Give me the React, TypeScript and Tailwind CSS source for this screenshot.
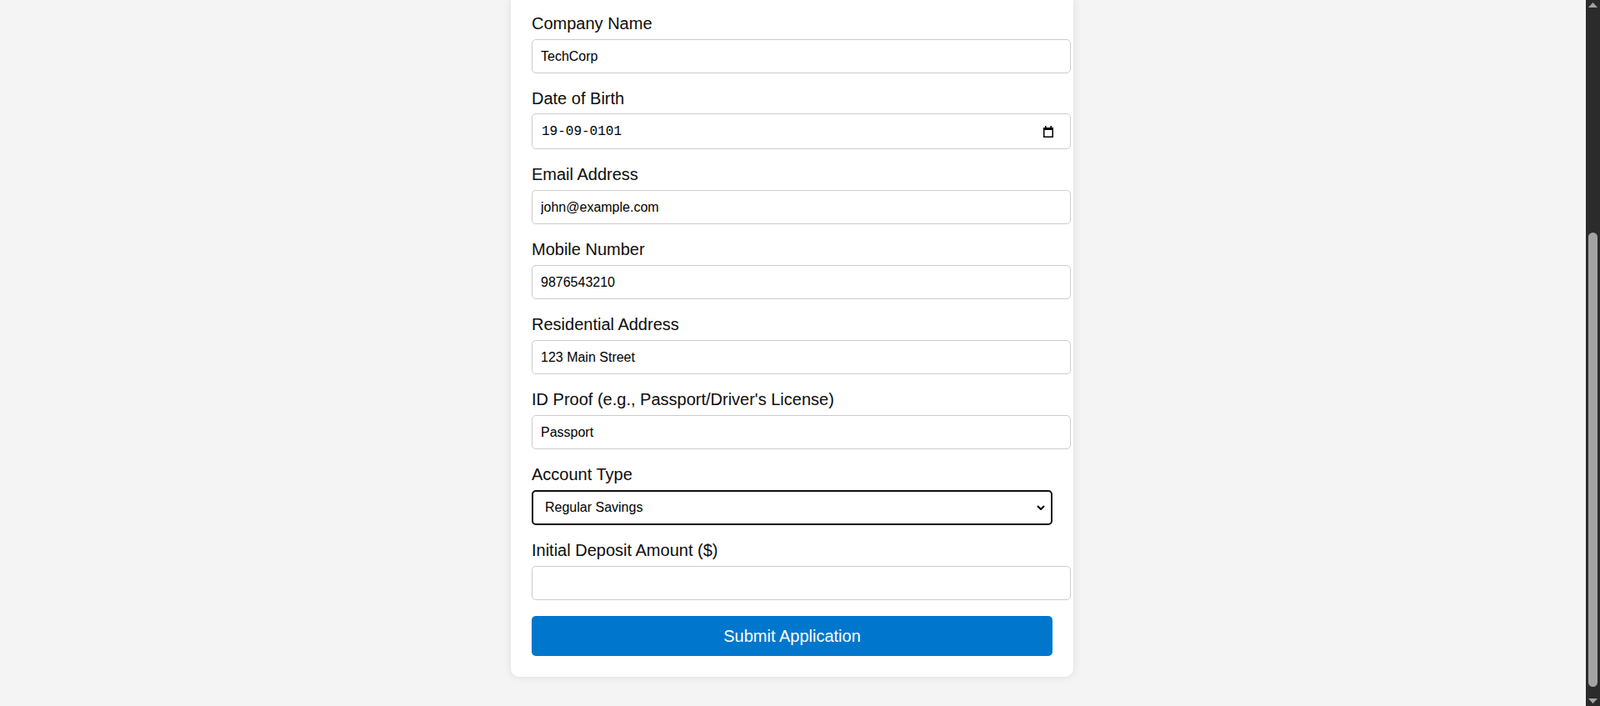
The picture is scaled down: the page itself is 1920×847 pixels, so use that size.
import React from 'react';

const fields = [
  { label: 'Company Name', value: 'TechCorp' },
  { label: 'Date of Birth', value: '19-09-0101', kind: 'date' },
  { label: 'Email Address', value: 'john@example.com' },
  { label: 'Mobile Number', value: '9876543210' },
  { label: 'Residential Address', value: '123 Main Street' },
  { label: "ID Proof (e.g., Passport/Driver's License)", value: 'Passport' },
  { label: 'Account Type', value: 'Regular Savings', kind: 'select' },
  { label: 'Initial Deposit Amount ($)', value: '', kind: 'last' },
];

function CalendarIcon() {
  return (
    <svg width="12" height="14" viewBox="0 0 12 14" className="shrink-0">
      <rect x="2" y="0" width="1.6" height="3" fill="#000" />
      <rect x="8.4" y="0" width="1.6" height="3" fill="#000" />
      <rect x="0" y="2" width="12" height="3" fill="#000" />
      <rect x="0.75" y="2.75" width="10.5" height="10.5" fill="none" stroke="#000" strokeWidth="1.5" />
    </svg>
  );
}

function Field({ label, value, kind }: { label: string; value: string; kind?: string }) {
  return (
    <div className={kind === 'last' ? 'mb-[19px]' : 'mb-[18px]'}>
      <label
        className={`block h-[23px] leading-[25px] text-[20px] text-[#0d0d0d] ${
          kind === 'date' ? 'mb-[7px]' : 'mb-2'
        }`}
      >
        {label}
      </label>

      {kind === 'date' && (
        <div className="w-[647px] h-[43px] flex items-center justify-between pl-[11px] pr-[20px] border border-[#ccc] rounded-[5px] bg-white">
          <span className="font-['Liberation_Mono',monospace] text-[16px] text-black">{value}</span>
          <CalendarIcon />
        </div>
      )}

      {kind === 'select' && (
        <div className="w-full h-[42px] flex items-center justify-between pl-[14px] pr-[7px] border-2 border-[#101010] rounded-[5px] bg-white">
          <span className="text-[16px] text-black">{value}</span>
          <svg width="10" height="6" viewBox="0 0 10 6">
            <path d="M1 1l4 4 4-4" fill="none" stroke="#000" strokeWidth="2" />
          </svg>
        </div>
      )}

      {(!kind || kind === 'last') && (
        <input
          type="text"
          defaultValue={value}
          readOnly
          className="block w-[647px] h-[41px] px-[10px] border border-[#ccc] rounded-[5px] bg-white text-[16px] text-black outline-none"
        />
      )}
    </div>
  );
}

export default function App() {
  return (
    <div className="h-screen flex bg-[#f4f4f4] overflow-hidden font-['Liberation_Sans',Arial,sans-serif]">
      {/* page */}
      <div className="flex-1 flex justify-center pr-[2px]">
        <div className="w-[675px] self-start bg-white rounded-b-[10px] shadow-[0_0_10px_rgba(0,0,0,0.1)] px-[25px] pt-4 pb-[25px]">
          {fields.map((f) => (
            <Field key={f.label} {...f} />
          ))}
          <button className="w-full h-[48px] rounded-[5px] bg-[#0077cc] text-white text-[20px]">
            Submit Application
          </button>
        </div>
      </div>

      {/* scrollbar */}
      <div className="w-[17px] bg-[#2b2b2b] flex flex-col items-center">
        <svg width="11" height="6" viewBox="0 0 11 6" className="mt-[3px]">
          <path d="M5.5 0L11 6H0z" fill="#a3a3a3" />
        </svg>
        <div className="w-[11px] h-[545px] mt-[270px] rounded-full bg-[#a3a3a3]" />
        <svg width="11" height="6" viewBox="0 0 11 6" className="mt-auto mb-[3px]">
          <path d="M0 0h11L5.5 6z" fill="#a3a3a3" />
        </svg>
      </div>
    </div>
  );
}
